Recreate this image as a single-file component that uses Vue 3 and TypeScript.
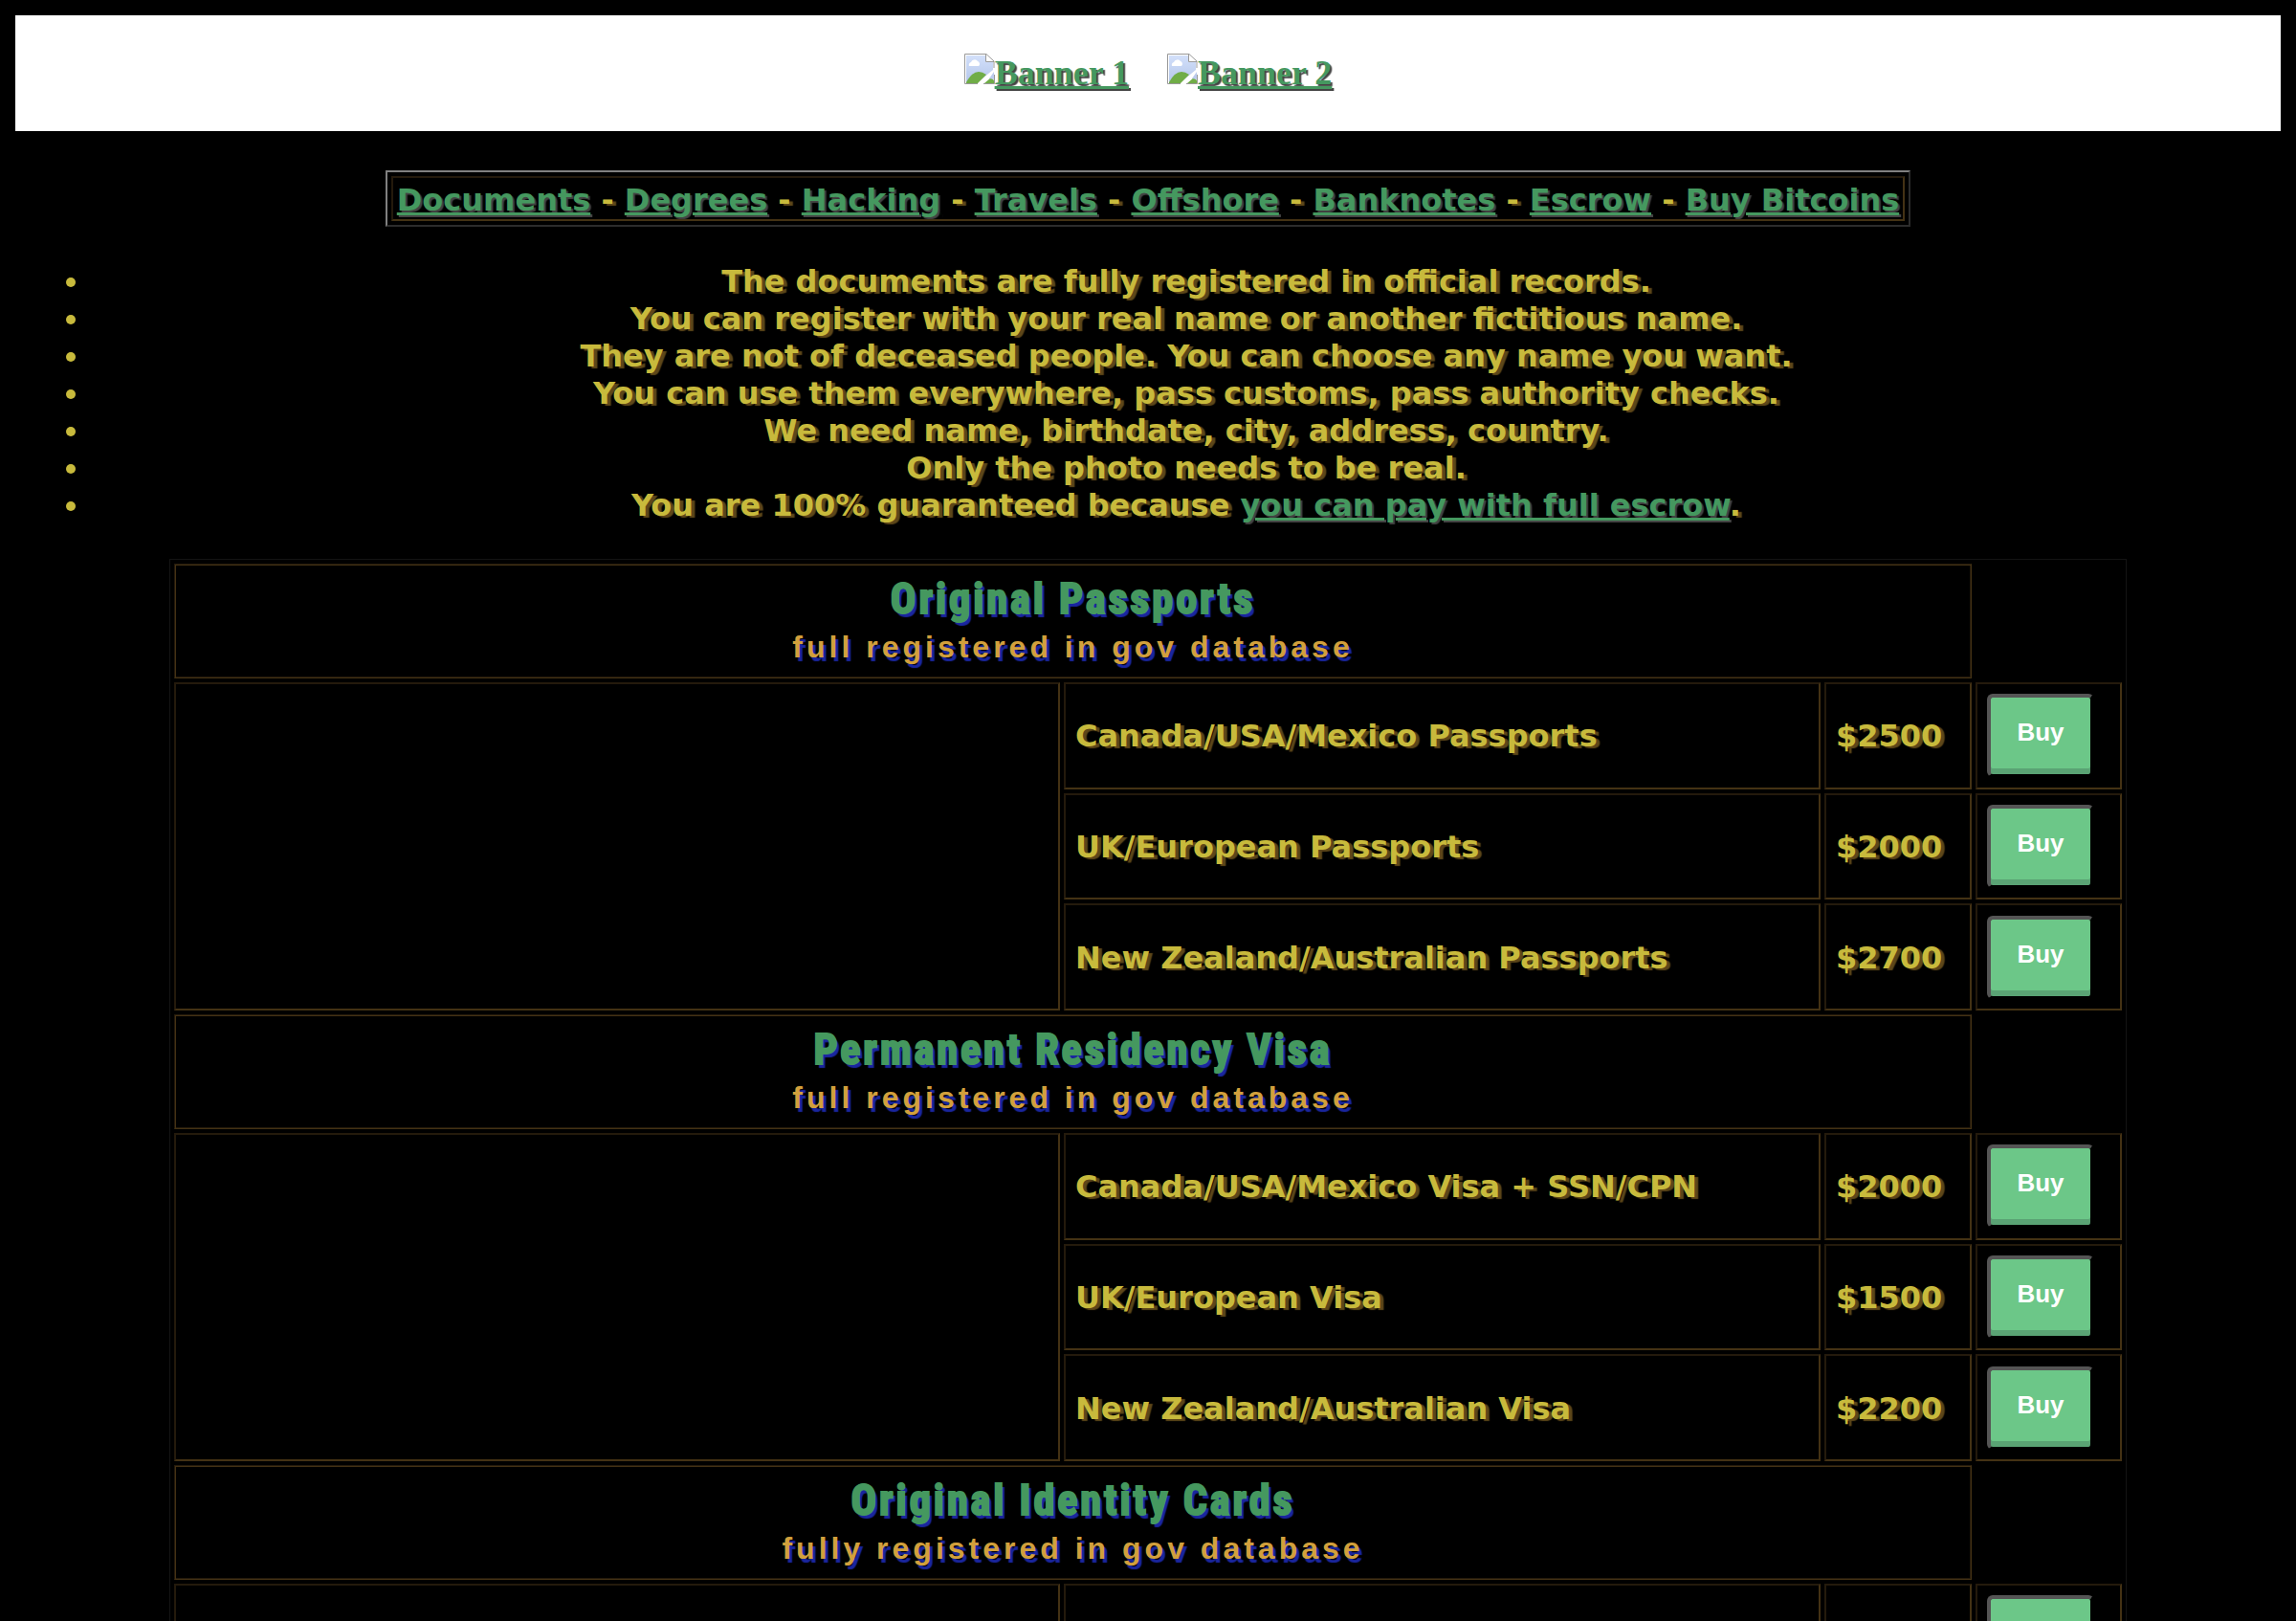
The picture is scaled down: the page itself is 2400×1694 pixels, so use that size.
<script setup lang="ts">
interface Item {
  name: string
  price: string
}

interface Section {
  title: string
  note: string
  items: Item[]
}

const banners: string[] = ['Banner 1', 'Banner 2']

const links: string[] = [
  'Documents',
  'Degrees',
  'Hacking',
  'Travels',
  'Offshore',
  'Banknotes',
  'Escrow',
  'Buy Bitcoins',
]

const notes: string[] = [
  'The documents are fully registered in official records.',
  'You can register with your real name or another fictitious name.',
  'They are not of deceased people. You can choose any name you want.',
  'You can use them everywhere, pass customs, pass authority checks.',
  'We need name, birthdate, city, address, country.',
  'Only the photo needs to be real.',
]

const sections: Section[] = [
  {
    title: 'Original Passports',
    note: 'full registered in gov database',
    items: [
      { name: 'Canada/USA/Mexico Passports', price: '$2500' },
      { name: 'UK/European Passports', price: '$2000' },
      { name: 'New Zealand/Australian Passports', price: '$2700' },
    ],
  },
  {
    title: 'Permanent Residency Visa',
    note: 'full registered in gov database',
    items: [
      { name: 'Canada/USA/Mexico Visa + SSN/CPN', price: '$2000' },
      { name: 'UK/European Visa', price: '$1500' },
      { name: 'New Zealand/Australian Visa', price: '$2200' },
    ],
  },
  {
    title: 'Original Identity Cards',
    note: 'fully registered in gov database',
    items: [{ name: '', price: '' }],
  },
]
</script>

<template>
  <div class="page">
    <header class="banners">
      <a v-for="banner in banners" :key="banner" href="#" class="banner">
        <svg class="broken" viewBox="0 0 32 32" aria-hidden="true">
          <defs>
            <linearGradient id="sky" x1="0" y1="0" x2="0" y2="1">
              <stop offset="0" stop-color="#d3e0fa" />
              <stop offset="1" stop-color="#b4c6ea" />
            </linearGradient>
          </defs>
          <path d="M0 0H23L32 8V16L15 32H0Z" fill="#ffffff" />
          <path d="M2 2H22V9H30V17L14 30H2Z" fill="url(#sky)" />
          <path d="M5 13a3 3 0 0 1 2-4a4 4 0 0 1 7-1a3 3 0 0 1 1 5Z" fill="#ffffff" />
          <path d="M2 30Q8 19 15 19Q19 19 23 22L14 31H2Z" fill="#70ad47" />
          <path d="M21 31L28 25L31 28V31Z" fill="#70ad47" />
          <path d="M31 19V27L26 26Z" fill="#bccbed" />
          <path d="M14 31.500H0.500V0.500H23L31 8V15" fill="none" stroke="#999999" />
          <path d="M22.500 1V8.500H31M31.500 22V31.500H20" fill="none" stroke="#999999" />
        </svg>
        <span>{{ banner }}</span>
      </a>
    </header>

    <nav class="menu">
      <div class="menu-cell">
        <template v-for="(link, i) in links" :key="link">
          <template v-if="i > 0"> - </template><a href="#">{{ link }}</a>
        </template>
      </div>
    </nav>

    <ul class="notes">
      <li v-for="note in notes" :key="note">{{ note }}</li>
      <li>You are 100% guaranteed because <a href="#">you can pay with full escrow</a>.</li>
    </ul>

    <table class="catalog">
      <colgroup>
        <col class="col-picture" />
        <col />
        <col class="col-price" />
        <col class="col-buy" />
      </colgroup>
      <tbody v-for="section in sections" :key="section.title">
        <tr>
          <th colspan="3" class="heading">
            <div class="title">{{ section.title }}</div>
            <div class="subtitle">{{ section.note }}</div>
          </th>
        </tr>
        <tr v-for="(item, i) in section.items" :key="i">
          <td v-if="i === 0" :rowspan="section.items.length" :class="{ picture: section.items.length > 1 }"></td>
          <td class="label">{{ item.name }}</td>
          <td class="label">{{ item.price }}</td>
          <td><button type="button" class="buy">Buy</button></td>
        </tr>
      </tbody>
    </table>
  </div>
</template>

<style>
body {
  background: #000000;
}
</style>

<style scoped>
.page {
  box-sizing: border-box;
  height: 100vh;
  overflow: hidden;
  padding: 16px;
  background: #000000;
  color: #c8ba3c;
  font-family: Verdana, "DejaVu Sans", sans-serif;
  font-size: 32px;
  font-weight: bold;
  line-height: 39px;
  text-shadow: 4px 2px 1px #5e4719;
}

a {
  color: #45985f;
  text-shadow: 2px 2px 1px #444444;
}

.banners {
  display: flex;
  justify-content: center;
  gap: 40px;
  padding: 40px 0 41px;
  background: #ffffff;
  font-family: "Liberation Serif", serif;
  font-size: 36px;
  line-height: 40px;
}

.banner {
  display: flex;
}

.broken {
  width: 32px;
  height: 32px;
}

.menu {
  box-sizing: border-box;
  width: fit-content;
  margin: 41px auto 38px;
  padding: 4px;
  border: 2px solid;
  border-color: #808080 #2c2c2c #2c2c2c #808080;
}

.menu-cell {
  padding: 4px 4px 0;
  border: 2px solid;
  border-color: #241a0c #443214 #443214 #241a0c;
  white-space: nowrap;
}

.notes {
  margin: 0 0 36px;
  padding: 0 0 0 80px;
  text-align: center;
}

.catalog {
  width: 2046px;
  max-width: 100%;
  margin: 0 auto;
  table-layout: fixed;
  border: 1px solid #141414;
  border-spacing: 4px;
}

.col-picture {
  width: 926px;
}

.col-price {
  width: 154px;
}

.col-buy {
  width: 153px;
}

td,
th {
  box-sizing: border-box;
  padding: 10px;
  border: 2px solid;
  border-color: #241a0c #443214 #443214 #241a0c;
  text-align: left;
}

.label {
  padding-top: 12px;
}

.picture {
  height: 343px;
}

.heading {
  padding: 11px 11px 7px;
  border-width: 1px;
  box-shadow: inset 1px 1px #443214, inset -1px -1px #241a0c;
  text-align: center;
  text-shadow: 3px 4px 1px #1a26a0;
}

.title {
  color: #45985f;
  font-family: Impact, "Liberation Sans Narrow", "Roboto Condensed", "Liberation Sans", sans-serif;
  font-size: 44px;
  line-height: 50px;
  letter-spacing: 3px;
  -webkit-text-stroke: 2px;
}

.subtitle {
  color: #d2a03c;
  font-family: "Liberation Sans", Arial, sans-serif;
  font-size: 32px;
  line-height: 50px;
  letter-spacing: 4px;
}

.buy {
  display: block;
  box-sizing: border-box;
  width: 112px;
  padding: 20px 0 28px;
  border: 4px solid;
  border-bottom-width: 3px;
  border-color: #555555 #000000 #000000 #555555;
  border-radius: 6px;
  background: #6cc788;
  box-shadow: inset 0 -6px 0 #5aa374;
  color: #ffffff;
  font-family: "Liberation Sans", Arial, sans-serif;
  font-size: 26px;
  font-weight: bold;
  line-height: 32px;
  text-align: center;
  text-shadow: none;
}
</style>
